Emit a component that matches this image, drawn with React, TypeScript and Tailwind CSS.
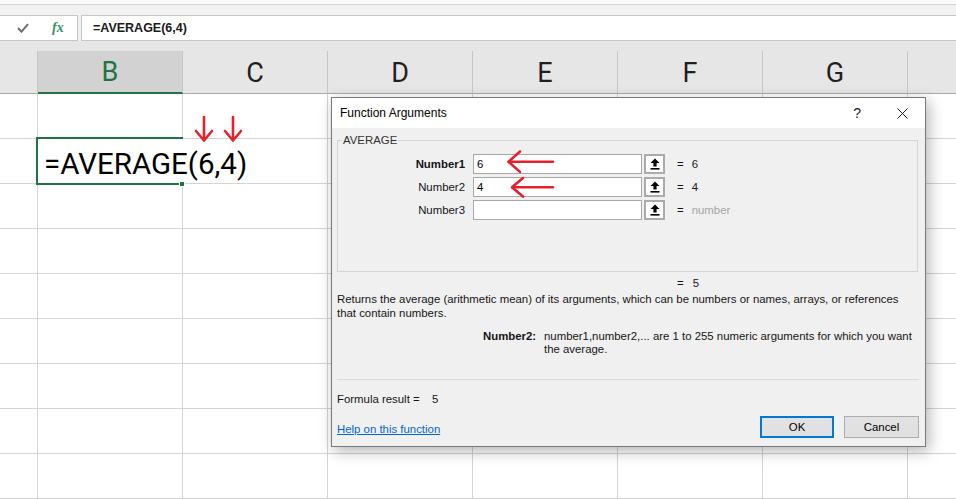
import React from "react";

const GRID = "grid grid-cols-[38px_145px_145px_145px_145px_145px_145px_1fr]";

function UpIcon() {
  return (
    <svg width="10" height="12" viewBox="0 0 10 12">
      <path d="M5 0.5 L9.5 5 H6.6 V8.6 H3.4 V5 H0.5 Z" fill="#000" />
      <rect x="0.5" y="10" width="9" height="1.6" fill="#000" />
    </svg>
  );
}

function ArgRow({
  label,
  bold,
  value,
  result,
  gray,
}: {
  label: string;
  bold?: boolean;
  value: string;
  result: string;
  gray?: boolean;
}) {
  return (
    <div className="flex items-center h-[20px]">
      <div className={bold ? "w-[127px] text-right font-bold" : "w-[127px] text-right"}>{label}</div>
      <div className="ml-[8px] w-[169px] h-[20px] border border-[#a8a8a8] bg-white pl-[3px] flex items-center text-black">
        {value}
      </div>
      <div className="ml-[2px] w-[21px] h-[20px] border-2 border-[#ababab] bg-white flex items-center justify-center">
        <UpIcon />
      </div>
      <div className="ml-[12px]">=</div>
      <div className={gray ? "ml-[8px] text-[#a6a6a6]" : "ml-[8px] text-[#1a1a1a]"}>{result}</div>
    </div>
  );
}

function ActiveCell() {
  return (
    <>
      <div className="absolute left-0 top-0 z-10 h-[44px] w-[215px] bg-white flex items-center pt-[8px] pl-[6px] font-['Roboto',sans-serif] text-[29.5px] leading-none text-black whitespace-nowrap">
        =AVERAGE(6,4)
      </div>
      <div className="absolute -left-[2px] -top-[2px] z-20 w-[147px] h-[48px] border-2 border-r-0 border-[#217346]" />
      <div className="absolute left-[141px] top-[42px] z-30 w-[6px] h-[6px] bg-[#217346] border border-white" />
    </>
  );
}

export default function App() {
  const letters = ["", "B", "C", "D", "E", "F", "G", ""];
  const rows = Array.from({ length: 9 });
  return (
    <div className="relative w-[956px] h-[499px] overflow-hidden bg-white font-['Liberation_Sans',Arial,sans-serif]">
      {/* ribbon edge */}
      <div className="h-[4px] bg-[#fbfbfb]" />
      <div className="h-[1px] bg-[#d4d4d4]" />
      <div className="h-[10px] bg-[#f1f1f1]" />

      {/* formula bar */}
      <div className="flex h-[26px] bg-[#f1f1f1]">
        <div className="w-[78px] border-y border-r border-[#c6c6c6] bg-white flex items-center">
          <svg className="ml-[17px]" width="12" height="10" viewBox="0 0 12 10">
            <polyline points="1,5 4.5,8.6 11,1.2" fill="none" stroke="#6d6d6d" strokeWidth="2" />
          </svg>
          <span className="ml-[23px] font-['Liberation_Serif',serif] italic font-bold text-[14px] leading-none text-[#3a8f5f]">
            fx
          </span>
        </div>
        <div className="ml-[3px] flex-1 border border-r-0 border-[#c6c6c6] bg-white flex items-center pl-[11px] text-[12.5px] font-bold text-[#1a1a1a]">
          =AVERAGE(6,4)
        </div>
      </div>
      <div className="h-[10px] bg-[#e6e6e6]" />

      {/* column headers */}
      <div className={`${GRID} h-[43px] bg-[#e6e6e6]`}>
        {letters.map((l, i) =>
          i === 1 ? (
            <div
              key={i}
              className="bg-[#d2d2d2] border-r border-r-[#c6c6c6] border-b-2 border-b-[#217346] flex items-center justify-center pt-[2px] font-['Roboto',sans-serif] text-[27px] leading-none text-[#217346]"
            >
              {l}
            </div>
          ) : (
            <div
              key={i}
              className={
                i < 7
                  ? "border-r border-r-[#c6c6c6] border-b border-b-[#ababab] flex items-center justify-center pt-[2px] font-['Roboto',sans-serif] text-[27px] leading-none text-[#1f1f1f]"
                  : "border-b border-b-[#ababab]"
              }
            >
              {l}
            </div>
          )
        )}
      </div>

      {/* grid rows */}
      {rows.map((_, r) => (
        <div key={r} className={`${GRID} h-[45px]`}>
          {Array.from({ length: 8 }).map((__, c) => (
            <div
              key={c}
              className={c < 7 ? "relative border-r border-b border-[#d4d4d4]" : "relative border-b border-[#d4d4d4]"}
            >
              {r === 1 && c === 1 && <ActiveCell />}
            </div>
          ))}
        </div>
      ))}

      {/* red down arrows */}
      <svg className="absolute left-[194px] top-[114px] z-40" width="50" height="30" viewBox="0 0 50 30">
        <g fill="none" stroke="#e5222b" strokeWidth="2.6" strokeLinecap="round" strokeLinejoin="round">
          <line x1="10" y1="3" x2="10" y2="26" />
          <polyline points="2,17 10,26.5 18,17" />
          <line x1="39" y1="3" x2="39" y2="26" />
          <polyline points="31,17 39,26.5 47,17" />
        </g>
      </svg>

      {/* dialog */}
      <div className="absolute left-[331px] top-[97px] z-50 w-[595px] h-[350px] border border-[#797979] bg-[#f0f0f0] shadow-[3px_4px_14px_rgba(0,0,0,0.3)] text-[11.4px] leading-[14px] text-[#151515]">
        <div className="h-[30px] bg-white flex items-center pl-[8px]">
          <span className="text-[12px] text-black">Function Arguments</span>
          <span className="ml-auto text-[14px] text-[#222]">?</span>
          <svg className="ml-[36px] mr-[17px]" width="11" height="11" viewBox="0 0 11 11">
            <path d="M0.5 0.5 L10.5 10.5 M10.5 0.5 L0.5 10.5" stroke="#1a1a1a" strokeWidth="1" />
          </svg>
        </div>

        <div className="pl-[5px] pr-[6px]">
          <div className="relative mt-[12px] w-[581px] h-[132px] border border-[#d5d5d5] pt-[13px]">
            <span className="absolute left-[4px] -top-[8px] bg-[#f0f0f0] px-[1px] text-[#333]">AVERAGE</span>
            <div className="flex flex-col gap-[3px]">
              <ArgRow label="Number1" bold value="6" result="6" />
              <ArgRow label="Number2" value="4" result="4" />
              <ArgRow label="Number3" value="" result="number" gray />
            </div>
          </div>

          <div className="mt-[4px] pl-[340px] flex">
            <span>=</span>
            <span className="ml-[9px]">5</span>
          </div>

          <div className="mt-[2px] whitespace-nowrap">
            Returns the average (arithmetic mean) of its arguments, which can be numbers or names, arrays, or references
            <br />
            that contain numbers.
          </div>

          <div className="mt-[10px] flex pl-[146px] leading-[13px]">
            <div className="w-[61px] font-bold">Number2:</div>
            <div className="whitespace-nowrap">
              number1,number2,... are 1 to 255 numeric arguments for which you want
              <br />
              the average.
            </div>
          </div>

          <div className="mt-[23px] h-[1px] bg-[#dadada]" />

          <div className="mt-[12px] flex">
            <span className="inline-block w-[95px]">Formula result =</span>
            <span>5</span>
          </div>

          <div className="mt-[10px] flex items-center h-[22px]">
            <span className="pt-[3px] text-[#0066cc] underline">Help on this function</span>
            <div className="ml-auto flex gap-[10px]">
              <div className="w-[74px] h-[22px] border-2 border-[#0078d7] bg-[#e1e1e1] flex items-center justify-center text-black">
                OK
              </div>
              <div className="w-[75px] h-[22px] border border-[#adadad] bg-[#e1e1e1] flex items-center justify-center text-black">
                Cancel
              </div>
            </div>
          </div>
        </div>

        {/* red left arrows */}
        <svg className="absolute left-[174px] top-[50px]" width="50" height="52" viewBox="0 0 50 52">
          <g fill="none" stroke="#e5222b" strokeWidth="2.6" strokeLinecap="round" strokeLinejoin="round">
            <line x1="3" y1="13.7" x2="47" y2="13.7" />
            <polyline points="14,3.5 2.5,13.7 14,23.9" />
            <line x1="6.5" y1="39.3" x2="47" y2="39.3" />
            <polyline points="17,30 6,39.3 17,48.6" />
          </g>
        </svg>
      </div>
    </div>
  );
}
